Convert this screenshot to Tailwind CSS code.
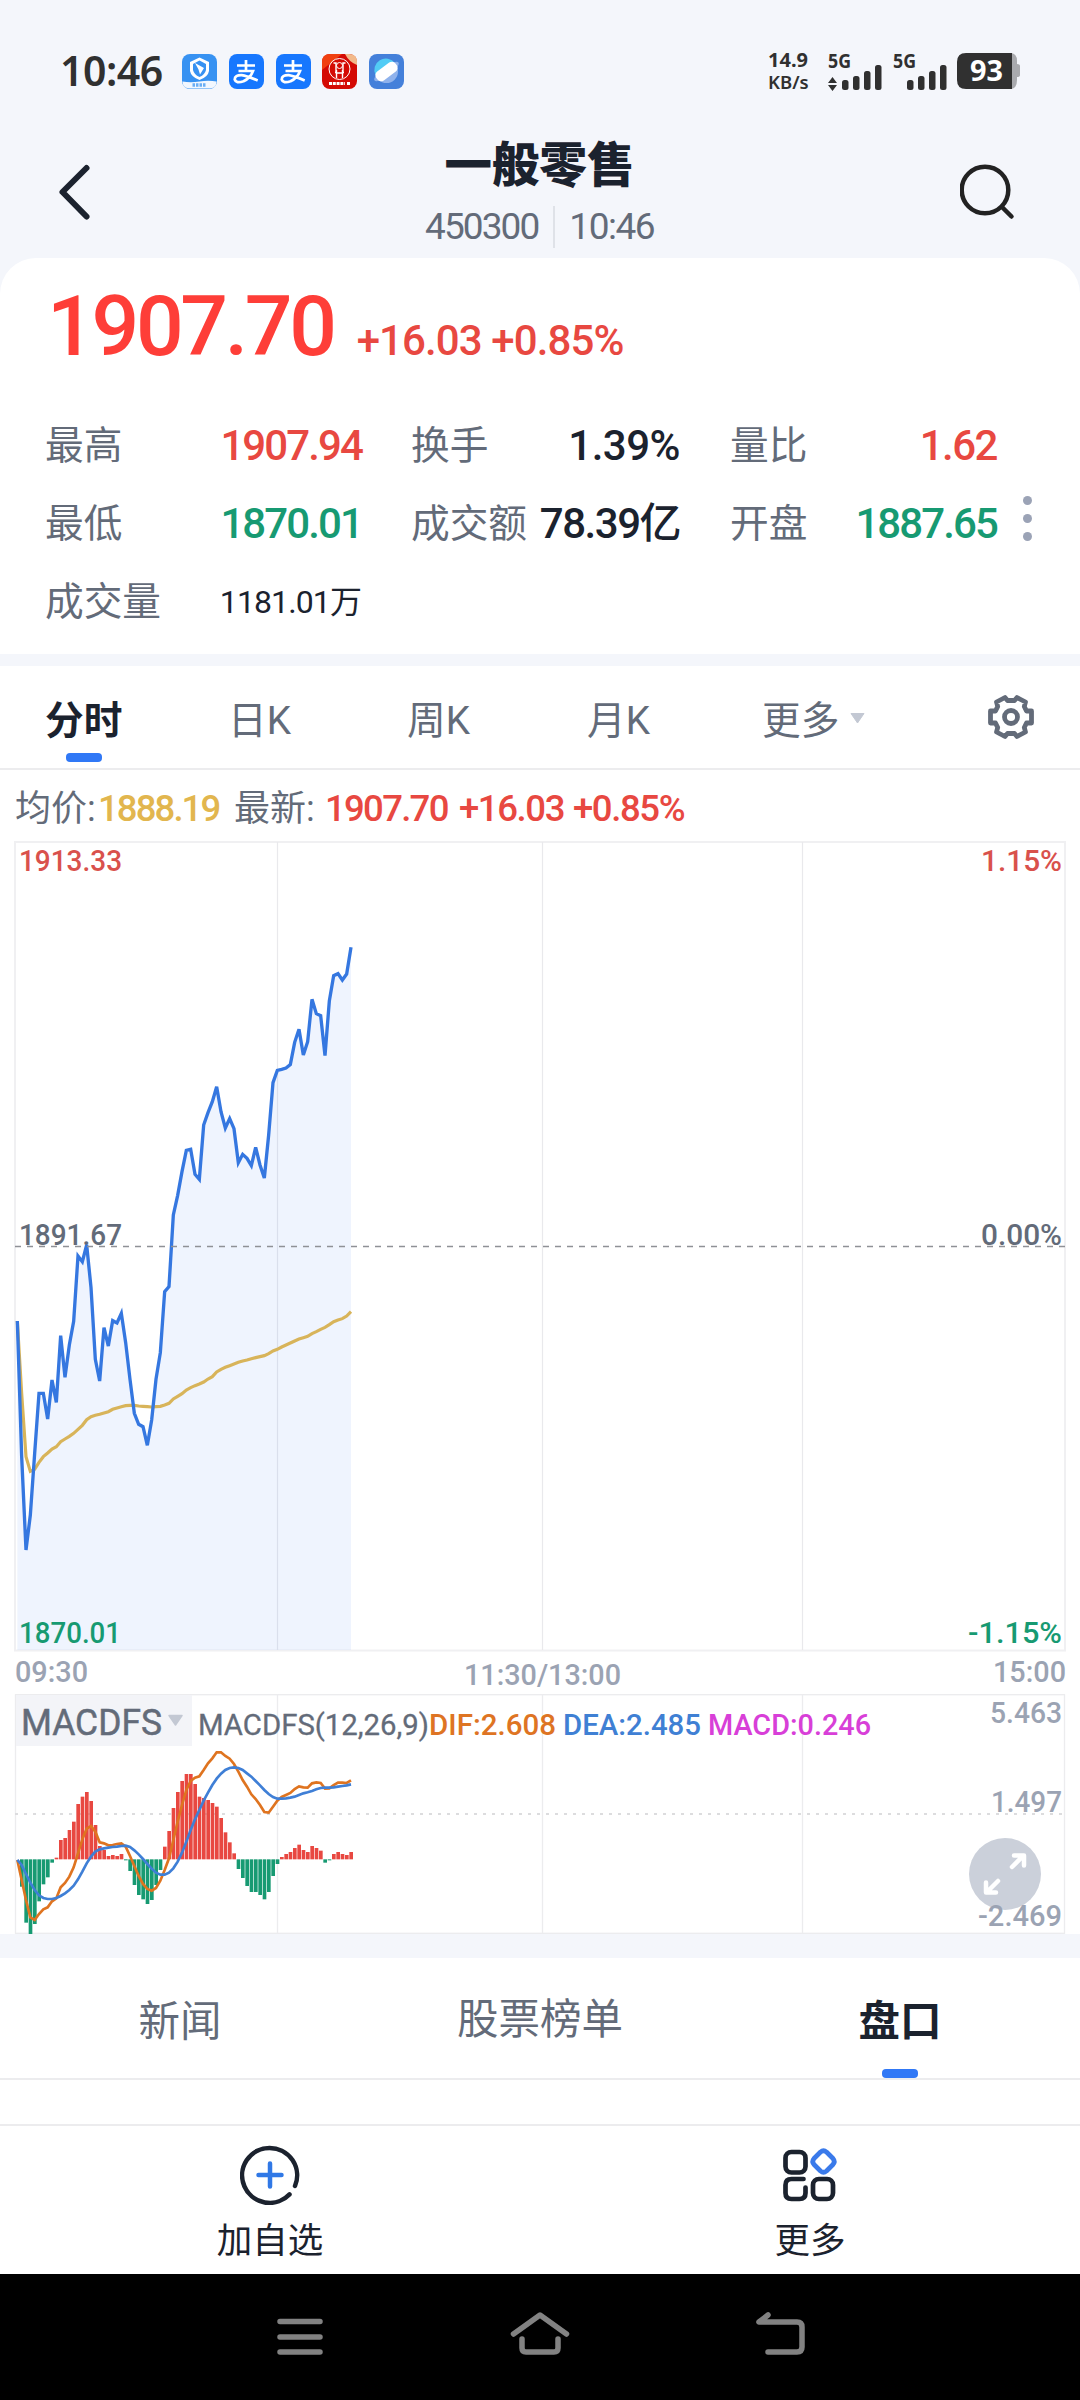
<!DOCTYPE html>
<html lang="zh-CN">
<head>
<meta charset="utf-8">
<title>一般零售 450300</title>
<script src="https://cdn.jsdelivr.net/npm/@tailwindcss/browser@4"></script>
</head>
<body class="w-[1080px] h-[2400px] overflow-hidden bg-white font-[Roboto,'Noto_Sans_CJK_SC',sans-serif] text-[#636b79]">
<div class="flex flex-col w-[1080px] h-[2400px]">

  <!-- header -->
  <div class="h-[258px] shrink-0 bg-[#f4f6fb] flex flex-col">
    <div class="h-[142px] flex items-center pl-[60px] pr-[60px] text-[#303030]">
      <div class="w-[122px] font-['Noto_Sans'] font-semibold text-[41px] leading-[48px] tracking-[-0.5px] -mt-[2px]">10:46</div>
      <div class="flex gap-[11.8px]">
        <svg width="35" height="35" viewBox="0 0 35 35"><rect width="35" height="35" rx="8" fill="#3792f2"/><path d="M0.500 27.500q8 1.500 17 0 9-1.500 17 0v0.500q-0.500 6.500-7 6.500H8q-7 0-7.500-6.500z" fill="#f2f7fe"/><path d="M17.500 3.500l9.500 4.500v9q-1 6-9.500 9-8.500-3-9.500-9V8z" fill="#fff"/><path d="M17.500 6.500l6.500 3.500v6q-1 4.500-6.500 7-5.500-2.500-6.500-7v-6z" fill="#3792f2"/><path d="M13 9l9 5-4 6.500-1.500-5z" fill="#fff"/><path d="M10.500 31h14" stroke="#6aaef5" stroke-width="3.500" stroke-dasharray="2.500 1"/></svg>
        <svg width="35" height="35" viewBox="0 0 35 35"><rect width="35" height="35" rx="8" fill="#1777fe"/><path d="M8 11.500h18M17 6v11M9.500 17h14.500q-2.500 7-9.500 10.300-7.500 2.500-8.800-1.800 0-4.500 7-4.300 5 .8 16 5.300" fill="none" stroke="#fff" stroke-width="2.700"/></svg>
        <svg width="35" height="35" viewBox="0 0 35 35"><rect width="35" height="35" rx="8" fill="#1777fe"/><path d="M8 11.500h18M17 6v11M9.500 17h14.500q-2.500 7-9.500 10.300-7.500 2.500-8.800-1.800 0-4.500 7-4.300 5 .8 16 5.300" fill="none" stroke="#fff" stroke-width="2.700"/></svg>
        <svg width="35" height="35" viewBox="0 0 35 35"><rect width="35" height="35" rx="8" fill="#d40a04"/><path d="M0 16V8q0-8 8-8h12z" fill="#f04010"/><path d="M23 0h4q8 0 8 8v3q-8-3-12-11z" fill="#f2b98a"/><circle cx="17.500" cy="15" r="10.500" fill="none" stroke="#fff" stroke-width="1"/><path d="M11.500 9h2.500v9.500h-1M23.500 9h-2.500v9.500h1M14.500 16v8M20.500 16v8M14.500 19h6" fill="none" stroke="#fff" stroke-width="1.400"/><circle cx="17.500" cy="11.500" r="3" fill="none" stroke="#fff"/><path d="M7 29.500h16M25 29.500h3" stroke="#fff" stroke-width="3" stroke-dasharray="3 .8"/></svg>
        <svg width="35" height="35" viewBox="0 0 35 35"><rect width="35" height="35" rx="8" fill="#4480da"/><circle cx="17.500" cy="17.500" r="11.500" fill="#8fb2ec"/><path d="M6.500 21A11.500 11.500 0 0 1 26 9z" fill="#52ccf5"/><ellipse cx="17.500" cy="17.500" rx="15" ry="4.500" transform="rotate(-37 17.500 17.500)" fill="#8fb2ec"/><rect x="5.500" y="12" width="24" height="11" rx="4.500" transform="rotate(-37 17.500 17.500)" fill="#fff"/></svg>
      </div>
      <div class="ml-auto flex items-center">
        <div class="w-[56px] flex flex-col font-['Noto_Sans'] font-bold text-[20px] leading-[22px]"><span>14.9</span><span class="text-[18.500px] font-semibold">KB/s</span></div>
        <svg width="196" height="44" viewBox="824 49 196 44" class="font-['Noto_Sans'] font-bold text-[19px]">
          <g fill="#303030">
            <text x="828" y="68" textLength="23" lengthAdjust="spacingAndGlyphs">5G</text>
            <text x="893" y="68" textLength="23" lengthAdjust="spacingAndGlyphs">5G</text>
            <path d="M832.500 77l4.500 6h-9zM832.500 91l4.500-6h-9z"/>
            <rect x="842" y="80" width="6.500" height="10" rx="2.500"/><rect x="853" y="76" width="6.500" height="14" rx="2.500"/><rect x="864" y="71" width="6.500" height="19" rx="2.500"/><rect x="875" y="65" width="6.500" height="25" rx="2.500"/>
            <rect x="907" y="80" width="6.500" height="10" rx="2.500"/><rect x="918" y="76" width="6.500" height="14" rx="2.500"/><rect x="929" y="71" width="6.500" height="19" rx="2.500"/><rect x="940" y="65" width="6.500" height="25" rx="2.500"/>
            <path d="M1000 53h10q7 0 7 8v3q3 0 3 2v9q0 2-3 2v3q0 9-7 9h-10z" fill="#a9aaae"/>
            <path d="M966 53h46v36h-46q-9 0-9-9V62q0-9 9-9z"/>
          </g>
          <text x="970" y="81" fill="#fff" font-size="28" textLength="33" lengthAdjust="spacingAndGlyphs">93</text>
        </svg>
      </div>
    </div>
    <div class="h-[116px] flex justify-between items-start px-[58px]">
      <svg width="34" height="60" class="mt-5" viewBox="58 162 34 60"><path d="M86.500 168L62.500 192l24 24.500" fill="none" stroke="#1b222e" stroke-width="6" stroke-linecap="round" stroke-linejoin="round"/></svg>
      <div class="flex flex-col items-center -mt-[1px] pl-[27px]">
        <div class="text-[47.500px] leading-[50px] font-black text-[#1b222e]">一般零售</div>
        <div class="flex items-center mt-[15px] text-[37px] leading-[42px]"><span class="tracking-[-1.900px]">450300</span><span class="w-[2px] h-[42px] bg-[#dfe2e8] ml-[15px] mr-[14px]"></span><span class="tracking-[-1.500px]">10:46</span></div>
      </div>
      <svg width="62" height="60" class="mt-5" viewBox="960 162 62 60"><g fill="none" stroke="#222" stroke-width="4.500" stroke-linecap="round"><circle cx="985" cy="190" r="23.300"/><path d="M1002 207l9.500 9.500"/></g></svg>
    </div>
  </div>

  <!-- quote card -->
  <div class="h-[396px] shrink-0 bg-[#f4f6fb]">
    <div class="h-full bg-white rounded-t-[36px]">
      <div class="flex items-baseline h-[149px] pl-[47px] pt-[20px] leading-[98px] font-medium text-[#fe3e38]">
        <span class="text-[84px] tracking-[-3.300px]">1907.70</span>
        <span class="text-[42px] text-[#e84841] tracking-[-0.900px] ml-[23px]">+16.03 +0.85%</span>
      </div>
      <div class="flex">
        <div class="grid grid-cols-[366px_319px_267px] auto-rows-[78px] pl-[45px] text-[38.700px] leading-[78px]">
          <div class="flex justify-between pr-[49px]"><span>最高</span><b class="font-medium text-[42px] tracking-[-1.900px] text-[#e84841]">1907.94</b></div>
          <div class="flex justify-between pr-[50px]"><span>换手</span><b class="font-medium text-[42px] tracking-[-0.500px] text-[#1b222e]">1.39%</b></div>
          <div class="flex justify-between"><span>量比</span><b class="font-medium text-[42px] tracking-[-1.500px] text-[#e84841]">1.62</b></div>
          <div class="flex justify-between pr-[49px]"><span>最低</span><b class="font-medium text-[42px] tracking-[-1.900px] text-[#179a72]">1870.01</b></div>
          <div class="flex justify-between pr-[50px]"><span>成交额</span><b class="font-medium text-[42px] tracking-[-1.500px] text-[#1b222e]">78.39亿</b></div>
          <div class="flex justify-between"><span>开盘</span><b class="font-medium text-[42px] tracking-[-1.900px] text-[#179a72]">1887.65</b></div>
          <div class="flex justify-between pr-[50px]"><span>成交量</span><b class="font-normal text-[32px] tracking-[-0.900px] text-[#1b222e]">1181.01万</b></div>
        </div>
        <div class="flex flex-col gap-[9px] pl-[26px] pt-[89px]"><i class="size-[9px] rounded-full bg-[#9ba3b6]"></i><i class="size-[9px] rounded-full bg-[#9ba3b6]"></i><i class="size-[9px] rounded-full bg-[#9ba3b6]"></i></div>
      </div>
    </div>
  </div>

  <!-- period tabs -->
  <div class="h-[12px] shrink-0 bg-[#f4f6fb]"></div>
  <div class="h-[104px] shrink-0 border-b-2 border-[#ececee] flex text-[38.700px] leading-[109px]">
    <div class="w-[182px] pl-[45px] relative font-bold text-[#1b222e]">分时<i class="absolute left-[66px] top-[87px] w-[36px] h-[9px] rounded-[4px] bg-[#3078f6]"></i></div>
    <div class="w-[179px] pl-[46px]">日K</div>
    <div class="w-[180px] pl-[46px]">周K</div>
    <div class="w-[176px] pl-[46px]">月K</div>
    <div class="w-[270px] pl-[45px] flex items-start">更多<svg class="mt-[47px] ml-[11px]" width="15" height="11" viewBox="0 0 15 11"><path d="M1 .5h13L7.500 10z" fill="#c3c8d3" stroke="#c3c8d3" stroke-linejoin="round"/></svg></div>
    <svg class="mt-[28px]" width="48" height="46" viewBox="-24 -23 48 46"><g fill="none" stroke="#636b79" stroke-width="4.800" stroke-linejoin="round"><circle r="6.500"/><path d="M-6 -19.500L-3.500 -16.500H3.500L6 -19.500L14.500 -15L13.300 -10.500L15.500 -6H20.500V6H15.500L13.300 10.500L14.500 15L6 19.500L3.500 16.500H-3.500L-6 19.500L-14.500 15L-13.300 10.500L-15.500 6H-20.500V-6H-15.500L-13.300 -10.500L-14.500 -15Z"/></g></svg>
  </div>

  <!-- intraday chart -->
  <div class="h-[71px] shrink-0 flex items-baseline pl-[15px] leading-[77px] text-[36px] font-medium text-[#e84841]">
    <span class="font-normal text-[#636b79] w-[83px]">均价:</span>
    <span class="text-[#e2b64e] text-[36.500px] tracking-[-1.900px] w-[136px]">1888.19</span>
    <span class="font-normal text-[#636b79] w-[91px]">最新:</span>
    <span class="text-[36.500px] tracking-[-1.700px] w-[134px]">1907.70</span>
    <span class="text-[36.500px] tracking-[-1.400px] w-[114px]">+16.03</span>
    <span class="text-[36.500px] tracking-[-1.400px]">+0.85%</span>
  </div>
  <svg class="shrink-0 font-medium text-[30px]" width="1080" height="853" viewBox="0 841 1080 853">
    <g fill="none" stroke="#f0f0f2" stroke-width="2"><rect x="15" y="842" width="1050" height="808.500"/><path d="M277.500 842v808M542.500 842v808M802.500 842v808" stroke="#e9e9ec" stroke-width="1.200"/></g>
    <text x="19" y="871" fill="#d9514c" textLength="103" lengthAdjust="spacingAndGlyphs">1913.33</text>
    <text x="1062" y="871" fill="#d9514c" text-anchor="end" textLength="81" lengthAdjust="spacingAndGlyphs">1.15%</text>
    <text x="19" y="1245" fill="#636b79" textLength="103" lengthAdjust="spacingAndGlyphs">1891.67</text>
    <text x="1062" y="1245" fill="#636b79" text-anchor="end" textLength="81" lengthAdjust="spacingAndGlyphs">0.00%</text>
    <g transform="translate(0 1230) scale(.33333)" fill="none">
      <path id="fill" fill="#3078f6" fill-opacity=".08"/>
      <polyline id="avg" stroke="#d8b45a" stroke-width="9.500"/>
      <polyline id="price" stroke="#3577e0" stroke-width="10"/>
    </g>
    <path d="M15 1246.500H1065" stroke="#8f9196" stroke-width="1.600" stroke-dasharray="6 6"/>
    <text x="19" y="1643" fill="#179a72" textLength="102" lengthAdjust="spacingAndGlyphs">1870.01</text>
    <text x="1062" y="1643" fill="#179a72" text-anchor="end" textLength="94" lengthAdjust="spacingAndGlyphs">-1.15%</text>
    <g fill="#9ba3b3"><text x="15" y="1682" textLength="73" lengthAdjust="spacingAndGlyphs">09:30</text><text x="464" y="1685" textLength="157" lengthAdjust="spacingAndGlyphs">11:30/13:00</text><text x="993" y="1682" textLength="73" lengthAdjust="spacingAndGlyphs">15:00</text></g>
  </svg>

  <!-- MACDFS chart -->
  <svg class="shrink-0 font-medium text-[29.500px]" width="1080" height="240" viewBox="0 1694 1080 240">
    <g fill="none" stroke="#ececee" stroke-width="1.300"><rect x="15.500" y="1694.700" width="1049" height="238.600"/><path d="M277.500 1694v240M542.500 1694v240M802.500 1694v240"/></g>
    <path d="M15 1814H1065" stroke="#dcdcde" stroke-width="2" stroke-dasharray="3 6"/>
    <rect x="16" y="1695" width="176" height="51" fill="#f3f4f8"/>
    <g fill="#636b79"><text x="21" y="1735" font-size="37" textLength="141" lengthAdjust="spacingAndGlyphs" class="font-normal" stroke="#636b79" stroke-width=".5">MACDFS</text><text x="198" y="1735" class="font-normal" textLength="231" lengthAdjust="spacingAndGlyphs" stroke="#636b79" stroke-width=".3">MACDFS(12,26,9)</text></g>
    <path d="M169 1715.500h13l-6.500 9.500z" fill="#c3c8d3" stroke="#c3c8d3" stroke-linejoin="round" stroke-width="1.500"/>
    <text x="429" y="1735" fill="#de7423" textLength="127" lengthAdjust="spacingAndGlyphs">DIF:2.608</text>
    <text x="563" y="1735" fill="#3f80d4" textLength="138" lengthAdjust="spacingAndGlyphs">DEA:2.485</text>
    <text x="708" y="1735" fill="#d83fd8" textLength="163" lengthAdjust="spacingAndGlyphs">MACD:0.246</text>
    <g transform="translate(0 1680) scale(.33333)" fill="none">
      <g id="bars"></g>
      <polyline id="dif" stroke="#df7420" stroke-width="8"/>
      <polyline id="dea" stroke="#3f7fd6" stroke-width="8"/>
    </g>
    <circle cx="1005" cy="1874" r="36" fill="#cbd0da"/>
    <path d="M1012 1867l11-11M1014 1855.500h10v10M998 1881l-11 11M986 1882.500v10h10" fill="none" stroke="#fff" stroke-width="4.500" stroke-linecap="round" stroke-linejoin="round"/>
    <g fill="#9ba3b3" text-anchor="end"><text x="1062" y="1723" textLength="72" lengthAdjust="spacingAndGlyphs">5.463</text><text x="1062" y="1812" textLength="71" lengthAdjust="spacingAndGlyphs">1.497</text><text x="1062" y="1926" textLength="84" lengthAdjust="spacingAndGlyphs">-2.469</text></g>
  </svg>
  <div class="h-[24px] shrink-0 bg-[#f4f6fb]"></div>

  <!-- section tabs -->
  <div class="h-[122px] shrink-0 border-b-2 border-[#ececee] grid grid-cols-3 text-center text-[41.500px] leading-[120px]">
    <div class="pt-[4px]">新闻</div>
    <div class="pt-[2px]">股票榜单</div>
    <div class="pt-[4px] relative font-bold text-[#1b222e]">盘口<i class="absolute left-[162px] top-[111px] w-[36px] h-[9px] rounded-[4px] bg-[#3078f6]"></i></div>
  </div>
  <div class="h-[46px] shrink-0 border-b-2 border-[#ececee]"></div>

  <!-- action bar -->
  <div class="h-[148px] shrink-0 grid grid-cols-2 text-[35.500px] leading-[40px] text-[#1b222e]">
    <div class="flex flex-col items-center pt-[19px]">
      <svg width="60" height="60" viewBox="-30 -30 60 60" fill="none" stroke="#1b222e" stroke-width="4.500" stroke-linecap="round"><path d="M25 11A27.500 27.500 0 1 0 19.500 19.400"/><path d="M-11.500 0h23M0 -11.500v23" stroke="#3078e6"/></svg>
      <div class="mt-[16px]">加自选</div>
    </div>
    <div class="flex flex-col items-center pt-[19px]">
      <svg width="60" height="60" viewBox="780 2145 60 60" fill="none" stroke="#1b222e" stroke-width="4.700" stroke-linecap="round" stroke-linejoin="round"><rect x="785.500" y="2152" width="20" height="20.500" rx="6"/><rect x="813" y="2179" width="20" height="20" rx="6"/><path d="M805.500 2187.500v5.500q0 6-6 6h-8q-6 0-6-6v-8q0-6 6-6H803.500"/><path d="M820.500 2152q3-2.500 6 0l6.500 6.500q2.500 3 0 6l-6.500 6.500q-3 2.500-6 0l-6.500-6.500q-2.500-3 0-6z" stroke="#3a7aea"/></svg>
      <div class="mt-[16px]">更多</div>
    </div>
  </div>

  <!-- system navigation -->
  <div class="flex-1 bg-black flex justify-center">
    <svg width="540" height="60" class="mt-[32px]" viewBox="270 2306 540 60" fill="none" stroke="#828282" stroke-width="5.500" stroke-linecap="round" stroke-linejoin="round"><path d="M280 2321.500h40M280 2337h40M280 2352h40"/><path d="M513.500 2334L540 2315l26.500 19" /><path d="M522 2339v9q0 4 4 4h28q4 0 4-4v-9"/><path d="M768 2315l-9 7h38q5 0 5 5v20q0 5-5 5h-29" /></svg>
  </div>
</div>

<script>
  const STEP = 13, X0 = 52;
  const price = [273,680,960,855,670,490,490,567,450,517,317,442,345,274,78,95,45,172,388,453,293,348,272,279,250,338,448,550,583,590,646,570,448,368,185,170,-45,-104,-175,-239,-242,-167,-152,-315,-352,-385,-430,-355,-306,-334,-304,-202,-227,-215,-193,-248,-195,-156,-285,-442,-479,-482,-486,-496,-563,-602,-525,-565,-692,-649,-643,-523,-687,-763,-769,-750,-768,-848];
  const avg = [273,490,680,724,718,697,680,669,657,650,635,627,619,610,598,586,569,560,556,553,549,545,538,534,530,527,526,526,528,529,530,531,530,529,525,520,507,499,491,480,473,467,462,456,447,440,426,418,412,407,402,397,393,390,386,383,380,377,371,363,358,351,345,339,333,327,323,319,311,305,298,292,284,275,270,266,258,245];
  const bars = [538,620,728,762,732,664,613,592,548,533,480,474,450,425,372,350,336,363,435,498,510,528,525,528,522,541,573,615,645,658,672,660,615,570,500,453,384,336,303,282,282,312,350,354,360,369,380,414,457,487,520,567,594,618,636,636,645,658,636,588,552,531,522,516,504,494,510,516,498,504,512,548,541,522,516,522,525,516];
  const dif = [540,600,660,712,720,702,688,682,664,655,622,609,590,562,520,478,446,438,455,487,490,496,495,492,490,500,528,558,588,612,627,632,624,602,570,535,480,425,375,330,303,293,289,270,250,235,217,217,228,236,252,275,300,320,343,357,375,396,398,380,362,351,345,339,327,319,322,323,310,307,309,326,325,315,308,308,309,301];
  const dea = [540,555,582,608,630,646,654,657,657,654,648,640,630,617,598,575,550,530,515,508,505,503,501,500,498,497,501,511,523,537,552,566,578,584,584,578,565,545,518,485,450,418,390,362,338,315,296,281,270,264,262,264,270,280,290,303,316,330,342,351,356,356,355,353,350,345,340,337,333,328,324,323,323,322,320,318,316,313];
  const pts = a => a.map((y, i) => (X0 + i * STEP) + ',' + y).join(' ');
  const $ = id => document.getElementById(id);
  $('price').setAttribute('points', pts(price));
  $('avg').setAttribute('points', pts(avg));
  $('dif').setAttribute('points', pts(dif));
  $('dea').setAttribute('points', pts(dea));
  $('fill').setAttribute('d', 'M' + pts(price) + ' 1053,1260 52,1260Z');
  $('bars').innerHTML = bars.map((y, i) => {
    const up = y < 538, top = Math.min(y, 538);
    return `<rect x="${X0 + i * STEP - 5}" y="${top}" width="11" height="${Math.abs(y - 538)}" fill="${up ? '#e84841' : '#179a72'}"/>`;
  }).join('');
</script>
</body>
</html>
